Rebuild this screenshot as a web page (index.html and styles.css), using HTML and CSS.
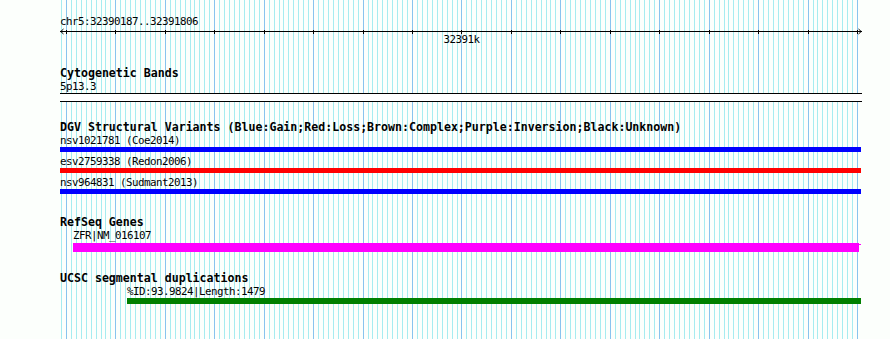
FILE: index.html
```html
<html lang="en">
<head>
  <meta charset="UTF-8">
  <title>chr5:32390187..32391806</title>
  <link rel="stylesheet" href="styles.css">
</head>
<body>
  <div class="panel">
    <svg class="grid" id="grid" width="802" height="339"></svg>

    <div class="ruler">
      <div class="ruler-title">chr5:32390187..32391806</div>
      <svg class="axis" id="axis" width="802" height="5">
        <line x1="0" y1="3.5" x2="802" y2="3.5" stroke="#000" stroke-width="1"></line>
        <polyline points="3.5,1 0.8,3.5 3.5,6" fill="none" stroke="#000" stroke-width="1"></polyline>
        <polyline points="798.5,1 801.2,3.5 798.5,6" fill="none" stroke="#000" stroke-width="1"></polyline>
      </svg>
      <div class="scale" id="scale"></div>
    </div>

    <div class="track track-cyto">
      <div class="track-title">Cytogenetic Bands</div>
      <div class="feature-label">5p13.3</div>
      <div class="band"></div>
    </div>

    <div class="track">
      <div class="track-title">DGV Structural Variants (Blue:Gain;Red:Loss;Brown:Complex;Purple:Inversion;Black:Unknown)</div>
      <div class="feature">
        <div class="feature-label">nsv1021781 (Coe2014)</div>
        <div class="bar bar-gain"></div>
      </div>
      <div class="feature">
        <div class="feature-label">esv2759338 (Redon2006)</div>
        <div class="bar bar-loss"></div>
      </div>
      <div class="feature">
        <div class="feature-label">nsv964831 (Sudmant2013)</div>
        <div class="bar bar-gain"></div>
      </div>
    </div>

    <div class="track">
      <div class="track-title">RefSeq Genes</div>
      <div class="feature feature-gene">
        <div class="feature-label">ZFR|NM_016107</div>
        <div class="bar bar-gene"></div>
      </div>
    </div>

    <div class="track track-last">
      <div class="track-title">UCSC segmental duplications</div>
      <div class="feature feature-dup">
        <div class="feature-label">%ID:93.9824|Length:1479</div>
        <div class="bar bar-dup"></div>
      </div>
    </div>
  </div>

  <script>
    const SVG_NS = 'http://www.w3.org/2000/svg';
    const regionStart = 32390187;
    const pxPerBp = 801 / 1620;

    function xOf(bp) {
      return Math.floor((bp - regionStart) * pxPerBp);
    }

    function drawGrid() {
      const grid = document.getElementById('grid');
      const axis = document.getElementById('axis');
      const scale = document.getElementById('scale');

      for (let bp = 32390190; bp <= 32391800; bp += 10) {
        const x = xOf(bp);
        const major = bp % 100 === 0;
        const rect = document.createElementNS(SVG_NS, 'rect');
        rect.setAttribute('x', x);
        rect.setAttribute('y', 0);
        rect.setAttribute('width', 1);
        rect.setAttribute('height', 339);
        rect.setAttribute('class', major ? 'grid-major' : 'grid-minor');
        grid.appendChild(rect);

        if (major) {
          const tick = document.createElementNS(SVG_NS, 'rect');
          tick.setAttribute('x', x);
          tick.setAttribute('y', 2);
          tick.setAttribute('width', 1);
          tick.setAttribute('height', 4);
          tick.setAttribute('fill', '#000');
          axis.appendChild(tick);
        }

        // only whole kilobases get a label
        if (bp % 1000 === 0) {
          const label = document.createElement('span');
          label.className = 'scale-label';
          label.textContent = (bp / 1000) + 'k';
          label.style.left = (x + 0.5) + 'px';
          scale.appendChild(label);
        }
      }
    }

    drawGrid();
  </script>
</body>
</html>
```

FILE: styles.css
```css
body {
  margin: 0;
  background-color: #fcfffc;
  font-family: "DejaVu Sans Mono", "Liberation Mono", monospace;
  font-size: 10.8px;
  letter-spacing: -0.5px;
  color: #000;
  overflow: hidden;
}

.panel {
  position: relative;
  width: 802px;
  height: 339px;
  margin-left: 60px;
  padding-top: 15px;
  box-sizing: border-box;
}

/* background grid */
.grid {
  position: absolute;
  top: 0;
  left: 0;
  z-index: 0;
}

.grid-minor {
  fill: #a6ecf0;
}

.grid-major {
  fill: #88c4ee;
}

.ruler,
.track {
  position: relative;
  z-index: 1;
}

.ruler-title,
.feature-label {
  height: 13px;
  line-height: 13px;
  white-space: nowrap;
}

.axis {
  display: block;
  overflow: visible;
}

.scale {
  position: relative;
  height: 13px;
  line-height: 13px;
}

.scale-label {
  position: absolute;
  top: 0;
  transform: translateX(-50%);
  white-space: nowrap;
}

/* tracks */
.track {
  margin-top: 19px;
}

.track-cyto {
  margin-top: 21px;
}

.track-last {
  margin-top: 20px;
}

.track-title {
  height: 13px;
  line-height: 13px;
  font-size: 11.6px;
  letter-spacing: 0;
  font-weight: bold;
  white-space: nowrap;
}

.band {
  height: 7px;
  width: 802px;
  background-color: #fff;
  border-top: 1px solid #000;
  border-bottom: 1px solid #000;
}

.feature {
  padding-bottom: 3px;
}

.bar {
  height: 5px;
  width: 801px;
}

.bar-gain {
  background-color: #0000ff;
}

.bar-loss {
  background-color: #ff0000;
}

.feature-gene {
  padding-bottom: 0;
  margin-left: 13px;
}

.bar-gene {
  position: relative;
  width: 786px;
  height: 9px;
  margin-top: 1px;
  background-color: #ff00ff;
}

.bar-gene::after {
  content: "";
  position: absolute;
  top: 1px;
  right: -2px;
  width: 2px;
  height: 1px;
  background-color: #ff00ff;
}

.feature-dup {
  margin-left: 67px;
}

.bar-dup {
  width: 734px;
  height: 6px;
  background-color: #008000;
}
```
